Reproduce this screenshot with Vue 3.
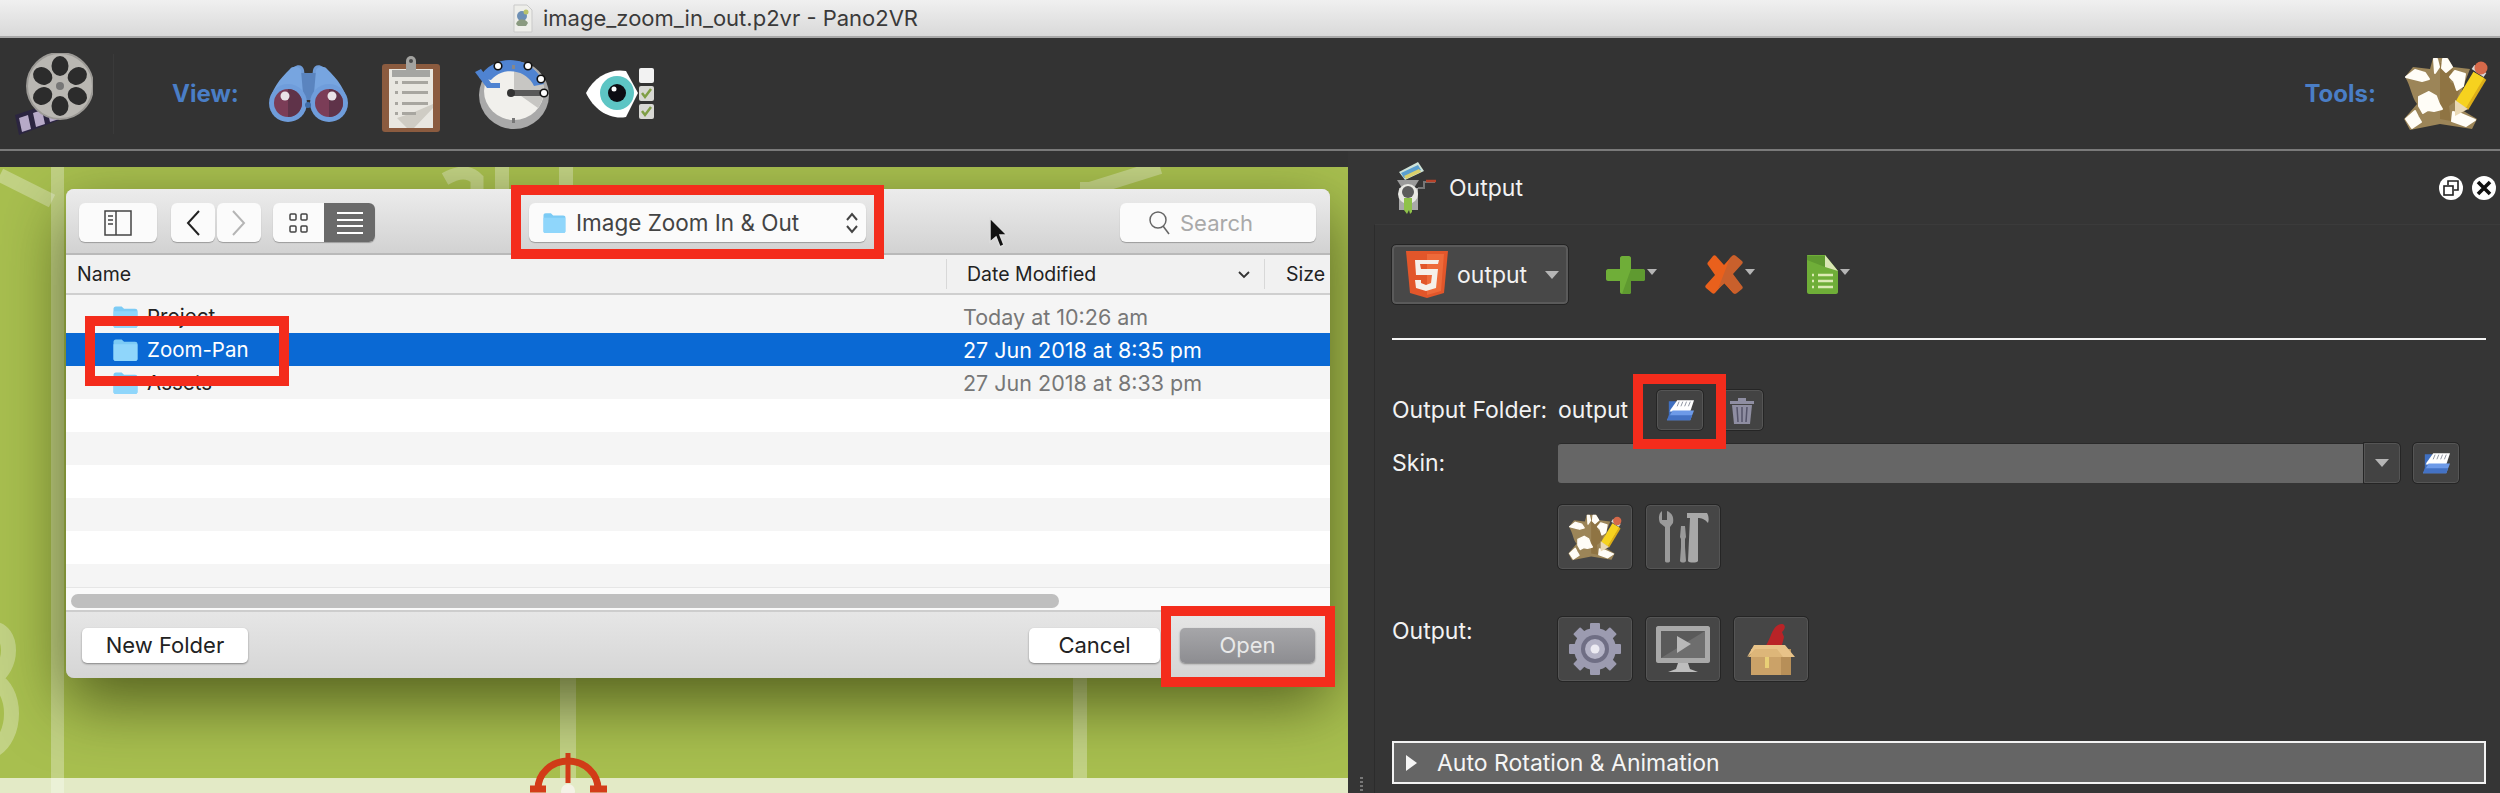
<template>
  <div class="window">
    <!-- shared icons -->
    <svg class="defs" width="0" height="0">
      <defs>
        <symbol id="folder-blue" viewBox="0 0 26 24">
          <path d="M1 4c0-1.500 1-2.500 2.500-2.500h6L12 4h11.500C25 4 26 5 26 6v16c0 1-.8 2-2 2H3c-1.200 0-2-1-2-2z" fill="#7ccbf5" />
          <path d="M1 6.500h25V22c0 1-.8 2-2 2H3c-1.200 0-2-1-2-2z" fill="#8fd6fb" />
        </symbol>
        <symbol id="open-folder" viewBox="0 0 30 22">
          <path d="M3 1h8L3 20z" fill="#3f6fc0" />
          <path d="M5 10L12 0h18l-4 12H4z" fill="#fff" />
          <path d="M14 1.500l-2 5M18 1.500l-2 5M22 1.500l-2 5M26 1.500l-2 5" stroke="#8a8f9c" stroke-width="1" />
          <path d="M7 11h23l-4 10.500H1z" fill="#6d9ae8" />
          <path d="M1 21.500L3 16h25l-2 5.500z" fill="#4472c4" />
        </symbol>
        <symbol id="hide" viewBox="0 0 84 74">
          <path d="M9 10l17 2 3-11h15l5 9 17 2-7 18-6 20 20 12-5 10-32-5-30 6-6-11 13-15c-6-8-6-18-12-27z" fill="#9c8558" />
          <path d="M36 6h8l5 5-3 14 10 4-3 14-8 6 2 15-11-2z" fill="#8f7443" />
          <g fill="#fffdf7" stroke="#fffdf7" stroke-width="2" stroke-linejoin="round">
            <path d="M30 2h3l2 8-4 6zM39 2h4l5 8-6 5-4-4z" />
            <path d="M2 20l9-7 10 3 4 6-7 2-4-1z" />
            <path d="M15 40l10-5 7 4 3 8 3 5-8 2-6-1-5 3-4-7z" />
            <path d="M2 62l9-8 3 6 3 5-9 6z" />
            <path d="M51 14l10 3-2 12-6 4-3-9-4-4z" />
            <path d="M49 55l8 2 14 6-9 6-14-5z" />
          </g>
          <path d="M57 48L75 18" stroke="#f6d21f" stroke-width="13" />
          <path d="M63 52L81 22" stroke="#dcae18" stroke-width="3" />
          <path d="M51 43l13 9-13 7z" fill="#ead9b5" />
          <path d="M69 10l12 8" stroke="#d8d8d8" stroke-width="5" />
          <circle cx="77" cy="11" r="6.500" fill="#d5694a" />
        </symbol>
      </defs>
    </svg>

    <div class="titlebar">
      <svg class="doc-icon" width="20" height="29" viewBox="0 0 20 29">
        <path d="M1 1h13l5 5v22H1z" fill="#eeeeea" stroke="#c9c9c9" />
        <circle cx="9" cy="12" r="5" fill="#6d8fb5" />
        <path d="M3 20c2-6 9-6 12-1l-2 3H5z" fill="#8a9a80" />
        <circle cx="13" cy="8" r="2.500" fill="#b8c26a" />
      </svg>
      <span>image_zoom_in_out.p2vr - Pano2VR</span>
    </div>

    <header class="toolbar">
      <svg class="reel" width="78" height="82" viewBox="0 0 78 82">
        <path d="M0 62l52-17 6 17-54 20z" fill="#2b2540" />
        <path d="M4 65l9-3 3 14-9 3zM18 60l9-3 3 14-9 3zM32 56l9-3 3 13-9 3z" fill="#b7aac8" />
        <circle cx="45" cy="33" r="33" fill="#b9b7b2" />
        <circle cx="45" cy="33" r="33" fill="none" stroke="#9c9a96" stroke-width="2" />
        <g fill="#2c2c2c">
          <ellipse v-for="angle in reelHoles" :key="angle" cx="45" cy="13" rx="8.500" ry="10" :transform="`rotate(${angle} 45 33)`" />
        </g>
        <circle cx="45" cy="33" r="4" fill="#777" />
      </svg>
      <div class="tb-sep"></div>
      <span class="tb-label view-label">View:</span>

      <svg class="tb-icon" width="81" height="57" viewBox="0 0 81 57">
        <path d="M26 2c4-3 9-2 10 3l2 15h5l2-15c1-5 6-6 10-3l-2 18H28z" fill="#6f9bd6" />
        <path d="M30 8h21v27H30z" fill="#5a84bf" />
        <path d="M22 4c2-3 9-3 11 1l3 35H2C2 25 12 14 22 4zM59 4c-2-3-9-3-11 1l-3 35h34C79 25 69 14 59 4z" fill="#77a5e0" />
        <circle cx="20" cy="38" r="19" fill="#6f9ddb" />
        <circle cx="61" cy="38" r="19" fill="#6f9ddb" />
        <circle cx="20" cy="38" r="14" fill="#7b3d57" />
        <circle cx="61" cy="38" r="14" fill="#7b3d57" />
        <path d="M20 24a14 14 0 0 1 0 28zM61 24a14 14 0 0 1 0 28z" fill="#5f3349" />
        <circle cx="17" cy="31" r="4.500" fill="#e9e4e8" />
        <circle cx="64" cy="31" r="4.500" fill="#e9e4e8" />
        <circle cx="40" cy="40" r="3" fill="#3f6ca8" />
      </svg>

      <svg class="tb-icon" width="58" height="77" viewBox="0 0 58 77">
        <rect x="0" y="9" width="58" height="68" rx="3" fill="#8b5b3f" />
        <rect x="7" y="14" width="44" height="59" fill="#e9e7e1" />
        <path d="M32 73l19-20v-4L30 58l-15 5 10 10z" fill="#cfccc4" />
        <rect x="10" y="15" width="38" height="7" fill="#a5a5a2" />
        <path d="M24 15V6a5 5 0 0 1 10 0v9z" fill="#a3a3a0" />
        <circle cx="29" cy="6" r="2" fill="#4a4a4a" />
        <g fill="#a8a6a0">
          <rect x="20" y="26" width="26" height="3" />
          <rect x="20" y="36" width="26" height="3" />
          <rect x="20" y="47" width="26" height="3" />
          <rect x="20" y="57" width="14" height="3" />
          <rect x="13" y="26" width="3" height="3" />
          <rect x="13" y="36" width="3" height="3" />
          <rect x="13" y="47" width="3" height="3" />
          <rect x="13" y="57" width="3" height="3" />
        </g>
      </svg>

      <svg class="tb-icon" width="77" height="71" viewBox="0 0 77 71">
        <ellipse cx="41" cy="37" rx="35" ry="34" fill="#a9a9a9" />
        <ellipse cx="41" cy="33" rx="30" ry="29" fill="#f1f0ec" />
        <path d="M41 33V4a30 29 0 0 1 24 46z" fill="#c7c6c3" />
        <path d="M6 20A36 36 0 0 1 71 26l-10 2A26 26 0 0 0 18 22z" fill="#4f83d1" />
        <path d="M2 14l12 16h13v-5H18L8 11z" fill="#4f83d1" />
        <path d="M38 32h32v6H38z" fill="#5a5a5a" />
        <circle cx="38" cy="35" r="4" fill="#333" />
        <g fill="#fff" stroke="#111" stroke-width="1.600">
          <circle cx="25" cy="8" r="3.800" />
          <circle cx="55" cy="8" r="3.800" />
          <circle cx="68" cy="21" r="3.800" />
          <circle cx="71" cy="35" r="3.800" />
        </g>
        <rect x="39" y="7" width="3" height="4" fill="#888" />
        <rect x="39" y="60" width="3" height="5" fill="#777" />
      </svg>

      <svg class="tb-icon eye-icon" width="68" height="52" viewBox="0 0 68 52">
        <path d="M0 25C8 8 26 0 40 3l12 22-12 24C24 52 8 42 0 25z" fill="#fff" />
        <circle cx="31" cy="25" r="17" fill="#5dc5c4" />
        <circle cx="31" cy="25" r="9" fill="#0c0c12" />
        <circle cx="28" cy="21" r="2.500" fill="#fff" />
        <rect x="53" y="0" width="15" height="15" rx="2" fill="#f2f2f2" />
        <g fill="#d8d8d4">
          <rect x="53" y="18" width="15" height="15" rx="2" />
          <rect x="53" y="36" width="15" height="15" rx="2" />
        </g>
        <path d="M56 25l3 4 6-8M56 43l3 4 6-8" fill="none" stroke="#7f9e45" stroke-width="2.500" />
      </svg>

      <span class="tb-label tools-label">Tools:</span>
      <svg class="hide-large" width="84" height="74"><use href="#hide" /></svg>
    </header>

    <main class="main">
      <div class="map-col">
        <div class="map">
          <div class="band band-left"></div>
          <div class="band band-bottom"></div>
          <div class="band band-mid-a"></div>
          <div class="band band-mid-b"></div>
          <svg class="map-marks" width="1348" height="626" viewBox="0 0 1348 626">
            <g fill="none" stroke="#fff" stroke-opacity=".3">
              <path d="M0 8l52 26" stroke-width="14" />
              <path d="M1080 22h10l70-22" stroke-width="14" />
              <path d="M445 12c14-8 24-8 32 0v30" stroke-width="13" />
              <path d="M502 0v40M566 0v40" stroke-width="14" />
              <path d="M-8 462c22 0 22 40 0 50 26 8 26 60 0 72" stroke-width="15" />
            </g>
            <g fill="none" stroke="#d33c18">
              <path d="M538 622a30 28 0 0 1 60 0" stroke-width="7" />
              <path d="M568 586v30" stroke-width="5" />
              <path d="M530 622h16M590 622h17" stroke-width="7" />
            </g>
            <circle cx="568" cy="624" r="7" fill="#f4f2e6" />
          </svg>

          <section class="dialog">
            <div class="dlg-bar">
              <button class="mac-btn side-btn">
                <svg width="28" height="26" viewBox="0 0 28 26" fill="none" stroke="#444" stroke-width="1.500">
                  <rect x="1" y="1" width="26" height="24" />
                  <path d="M12 1v24M4 6h5M4 10h5M4 14h5" />
                </svg>
              </button>
              <div class="nav-group">
                <button class="mac-btn nav-btn">
                  <svg width="14" height="26" viewBox="0 0 14 26" fill="none" stroke="#222" stroke-width="2"><path d="M13 1L2 13l11 12" /></svg>
                </button>
                <button class="mac-btn nav-btn">
                  <svg width="14" height="26" viewBox="0 0 14 26" fill="none" stroke="#b5b5b5" stroke-width="2"><path d="M1 1l11 12L1 25" /></svg>
                </button>
              </div>
              <div class="seg">
                <button class="seg-btn">
                  <svg width="19" height="20" viewBox="0 0 19 20" fill="none" stroke="#444" stroke-width="1.500">
                    <rect x="1" y="1" width="6" height="6" rx="1" />
                    <rect x="12" y="1" width="6" height="6" rx="1" />
                    <rect x="1" y="13" width="6" height="6" rx="1" />
                    <rect x="12" y="13" width="6" height="6" rx="1" />
                  </svg>
                </button>
                <button class="seg-btn seg-on">
                  <svg width="26" height="22" viewBox="0 0 26 22" fill="none" stroke="#fff" stroke-width="2"><path d="M0 1h26M0 8h26M0 14h26M0 21h26" /></svg>
                </button>
              </div>
              <div class="popup">
                <svg width="26" height="21"><use href="#folder-blue" /></svg>
                <span>Image Zoom In &amp; Out</span>
                <svg class="updown" width="14" height="22" viewBox="0 0 14 22" fill="none" stroke="#444" stroke-width="2"><path d="M2 8l5-6 5 6M2 14l5 6 5-6" /></svg>
              </div>
              <div class="search">
                <svg width="22" height="24" viewBox="0 0 22 24" fill="none" stroke="#666" stroke-width="1.500">
                  <ellipse cx="9" cy="9" rx="8" ry="8" />
                  <path d="M14 15l6 8" />
                </svg>
                <span>Search</span>
              </div>
            </div>

            <div class="list-head">
              <span class="head-name">Name</span>
              <span class="head-date">
                Date Modified
                <svg width="12" height="8" viewBox="0 0 12 8" fill="none" stroke="#333" stroke-width="1.800"><path d="M1 1l5 5 5-5" /></svg>
              </span>
              <span class="head-size">Size</span>
            </div>

            <div class="list-body">
              <div v-for="(row, i) in rows" :key="i" class="row" :class="{ selected: row.selected, white: row.white }">
                <span class="row-name">
                  <svg v-if="row.name" width="26" height="23"><use href="#folder-blue" /></svg>
                  {{ row.name }}
                </span>
                <span class="row-date">{{ row.date }}</span>
              </div>
            </div>

            <div class="scroll-strip"><div class="scroll-thumb"></div></div>

            <div class="dlg-foot">
              <button class="foot-btn new-btn">New Folder</button>
              <div class="foot-right">
                <button class="foot-btn cancel-btn">Cancel</button>
                <button class="foot-btn open-btn">Open</button>
              </div>
            </div>
          </section>

          <div class="mark mark-popup"></div>
          <div class="mark mark-row"></div>
          <div class="mark mark-open"></div>

          <svg class="cursor" width="20" height="32" viewBox="0 0 20 32">
            <path d="M2 1v24l6-5 4 10 4-2-4-10h7z" fill="#111" stroke="#ddd" stroke-width="1.500" />
          </svg>
        </div>
      </div>

      <aside class="panel">
        <div class="panel-head">
          <svg width="40" height="52" viewBox="0 0 40 52">
            <path d="M3 10L22 0l6 9-19 9z" fill="#cfe3d8" />
            <path d="M5 11l17-8 3 5-17 8z" fill="#5a9fcf" />
            <path d="M8 14l15-7 2 3-15 7z" fill="#d9cf6a" />
            <path d="M1 18h22l-5 8H6z" fill="#9a9a9a" />
            <path d="M3 26h19v22H3z" fill="#a9a9a9" />
            <circle cx="12" cy="32" r="10" fill="#e9e9e4" />
            <circle cx="12" cy="30" r="6" fill="#5c5c5c" />
            <path d="M22 26h6v-6h11" fill="none" stroke="#777" stroke-width="2" />
            <path d="M30 19h10" stroke="#b5432b" stroke-width="2.500" />
            <path d="M8 36h8v14l-2 2-1-4-2 4-3-4z" fill="#8fc24a" />
          </svg>
          <span>Output</span>
          <div class="win-btns">
            <button class="win-btn">
              <svg width="16" height="16" viewBox="0 0 16 16" fill="none" stroke="#222" stroke-width="1.600">
                <rect x="1" y="6" width="9" height="9" />
                <path d="M5 5V1h10v9h-4" />
              </svg>
            </button>
            <button class="win-btn">
              <svg width="16" height="16" viewBox="0 0 16 16" fill="none" stroke="#111" stroke-width="3.600"><path d="M2 2l12 12M14 2L2 14" /></svg>
            </button>
          </div>
        </div>

        <div class="panel-body">
          <div class="out-row">
            <button class="out-select">
              <svg width="42" height="47" viewBox="0 0 42 47">
                <path d="M0 0h42l-4 42-17 5-17-5z" fill="#e2562a" />
                <path d="M21 3h17l-3 37-14 4z" fill="#ee6a3a" />
                <path d="M33 9H9l1 15h16l-1 8-5 2-5-2v-3H9l1 8 10 3 10-3 2-19H15l-1-5h18z" fill="#f5efe9" />
              </svg>
              <span>output</span>
              <i class="tri"></i>
            </button>
            <div class="tool tool-add">
              <svg width="39" height="38" viewBox="0 0 39 38">
                <path d="M14 2c0-1 1-2 2-2h7c1 0 2 1 2 2v11h12c1 0 2 1 2 2v8c0 1-1 2-2 2H25v11c0 1-1 2-2 2h-7c-1 0-2-1-2-2V25H2c-1 0-2-1-2-2v-8c0-1 1-2 2-2h12z" fill="#6fae38" />
                <path d="M25 13h12c1 0 2 1 2 2v8c0 1-1 2-2 2H25v11c0 1-1 2-2 2h-7z" fill="#5f9a30" />
              </svg>
              <i class="tri tri-small"></i>
            </div>
            <div class="tool tool-del">
              <svg width="39" height="39" viewBox="0 0 39 39">
                <path d="M5 6l4-5c1-1 2-1 3 0l8 9 8-9c1-1 2-1 3 0l6 5c1 1 1 2 0 3l-9 10 9 12c1 1 1 2 0 3l-5 4c-1 1-2 1-3 0l-9-10-9 10c-1 1-2 1-3 0l-6-5c-1-1-1-2 0-3l9-10-7-10c-1-1-1-2 1-4z" fill="#e9601c" />
                <path d="M26 3l3-2c1-1 2-1 3 0l6 5c1 1 1 2 0 3l-9 10 9 12c1 1 1 2 0 3l-5 4c-1 1-2 1-3 0l-9-10-7 6z" fill="#c9602c" />
              </svg>
              <i class="tri tri-small"></i>
            </div>
            <div class="tool tool-doc">
              <svg width="31" height="39" viewBox="0 0 31 39">
                <path d="M0 1c0-1 0-1 1-1h17l13 16v21c0 1-1 2-2 2H2c-1 0-2-1-2-2z" fill="#6fae38" />
                <path d="M18 0l13 16-13-4z" fill="#d9e6b4" />
                <path d="M0 1h18v11L0 5z" fill="#5f9a30" />
                <path d="M11 20h15M11 26h15M11 32h15M5 20h2M5 26h2M5 32h2" stroke="#dceab4" stroke-width="2.500" />
              </svg>
              <i class="tri tri-small"></i>
            </div>
          </div>

          <hr class="rule" />

          <div class="form">
            <label>Output Folder:</label>
            <div class="folder-line">
              <span class="folder-value">output</span>
              <button class="sq-btn"><svg width="28" height="21"><use href="#open-folder" /></svg></button>
              <button class="sq-btn trash-btn">
                <svg width="24" height="27" viewBox="0 0 24 27">
                  <path d="M0 4h24v3H0zM8 1h8v3H8z" fill="#8f8ea2" />
                  <path d="M2 8h20l-2 19H4z" fill="#8f8ea2" />
                  <path d="M7 10l1 15M12 10v15M17 10l-1 15" stroke="#55546a" stroke-width="1.500" />
                </svg>
              </button>
            </div>

            <label>Skin:</label>
            <div class="skin-line">
              <div class="skin-field"></div>
              <button class="skin-drop"><i class="tri"></i></button>
              <button class="sq-btn skin-open"><svg width="28" height="21"><use href="#open-folder" /></svg></button>
            </div>

            <label></label>
            <div class="icon-line">
              <button class="big-btn"><svg width="54" height="47"><use href="#hide" /></svg></button>
              <button class="big-btn">
                <svg width="52" height="52" viewBox="0 0 52 52">
                  <path d="M5 0v9h5V0c5 2 7 6 6 12l-3 4v34c0 2-5 2-5 0V16L3 12C1 7 2 2 5 0z" fill="#9a9a9a" />
                  <path d="M24 15h4l1 11-1 2v8l1 14c-1 2-5 2-6 0l1-14v-8l-1-2z" fill="#9a9a9a" />
                  <path d="M30 2h20c2 3 2 8 1 10-3-4-7-5-10-5v43c-1 2-9 2-10 0l2-43h-3z" fill="#a8a8a8" />
                </svg>
              </button>
            </div>

            <label class="out-label">Output:</label>
            <div class="icon-line output-line">
              <button class="big-btn">
                <svg width="52" height="52" viewBox="0 0 52 52">
                  <g fill="#9c9bb0">
                    <rect v-for="angle in gearTeeth" :key="angle" x="21" y="0" width="10" height="12" rx="1" :transform="`rotate(${angle} 26 26)`" />
                  </g>
                  <circle cx="26" cy="26" r="21" fill="#9c9bb0" />
                  <circle cx="26" cy="26" r="14" fill="#6f6e84" />
                  <circle cx="26" cy="26" r="10" fill="#b4b3c6" />
                  <circle cx="26" cy="26" r="4.500" fill="#ecebf2" />
                </svg>
              </button>
              <button class="big-btn">
                <svg width="54" height="46" viewBox="0 0 54 46">
                  <path d="M2 0h50c1 0 2 1 2 2v33c0 1-1 2-2 2H2c-1 0-2-1-2-2V2C0 1 1 0 2 0z" fill="#a9a9a9" />
                  <rect x="5" y="5" width="44" height="27" fill="#5a5a5a" />
                  <path d="M5 32L49 5v27z" fill="#6e6e6e" />
                  <path d="M21 10l14 8-14 9z" fill="#b8b8b8" />
                  <path d="M22 37h10l2 6 8 3H12l8-3z" fill="#bdbdbd" />
                </svg>
              </button>
              <button class="big-btn">
                <svg width="48" height="52" viewBox="0 0 48 52">
                  <path d="M16 26c6-6 7-14 11-20 1-3 8-7 10-4 2 2 0 5-2 7l2 5-3 12z" fill="#b92327" />
                  <rect x="4" y="26" width="40" height="26" fill="#cba268" />
                  <rect x="34" y="26" width="10" height="26" fill="#b78f58" />
                  <path d="M0 34l7-12h31l10 12H35l-6-8H10z" fill="#e8c389" />
                  <path d="M8 26h22l6 8H1z" fill="#ddb679" />
                  <rect x="18" y="34" width="4" height="11" fill="#e9cf76" />
                </svg>
              </button>
            </div>
          </div>

          <div class="accordion">
            <i class="acc-tri"></i>
            <span>Auto Rotation &amp; Animation</span>
          </div>
        </div>

        <div class="mark mark-folder"></div>
        <div class="grip"></div>
      </aside>
    </main>
  </div>
</template>

<script setup>
const reelHoles = [0, 60, 120, 180, 240, 300]
const gearTeeth = [0, 45, 90, 135, 180, 225, 270, 315]

const rows = [
  { name: 'Project', date: 'Today at 10:26 am' },
  { name: 'Zoom-Pan', date: '27 Jun 2018 at 8:35 pm', selected: true },
  { name: 'Assets', date: '27 Jun 2018 at 8:33 pm' },
  { white: true },
  {},
  { white: true },
  {},
  { white: true },
  {}
]
</script>

<style>
html, body {
  margin: 0;
  background: #353535;
}
</style>

<style scoped>
* {
  box-sizing: border-box;
}

.window {
  width: 2500px;
  height: 793px;
  overflow: hidden;
  position: relative;
  font-family: Inter, "Liberation Sans", sans-serif;
  background: #353535;
}

.defs {
  position: absolute;
}

button {
  font-family: inherit;
  padding: 0;
  margin: 0;
}

.titlebar {
  height: 38px;
  padding-left: 513px;
  display: flex;
  align-items: center;
  gap: 10px;
  background: linear-gradient(#f0f0f0, #d9d9d9);
  border-bottom: 2px solid #a8a8a8;
  font-size: 22px;
  color: #3a3a3a;
}

.toolbar {
  height: 113px;
  display: flex;
  align-items: center;
  padding: 0 12px 0 15px;
  background: #333;
  border-bottom: 2px solid #7a7a7a;
}

.tb-sep {
  width: 1px;
  height: 80px;
  margin-left: 20px;
  background: #3a3a3a;
}

.tb-label {
  font-size: 24px;
  font-weight: 700;
  color: #4a7ec6;
}

.view-label {
  margin-left: 58px;
}

.tb-icon {
  margin-left: 33px;
}

.view-label + .tb-icon {
  margin-left: 29px;
}

.eye-icon {
  margin-left: 36px;
}

.tools-label {
  margin-left: auto;
}

.hide-large {
  margin-left: 28px;
}

.main {
  height: 642px;
  display: flex;
}

.map-col {
  width: 1348px;
  padding-top: 16px;
  background: #333;
}

.map {
  position: relative;
  width: 1348px;
  height: 626px;
  overflow: hidden;
  background: #a8bf4f;
}

.band {
  position: absolute;
  background: rgba(255, 255, 255, 0.3);
}

.band-left {
  left: 51px;
  top: 0;
  bottom: 0;
  width: 13px;
}

.band-bottom {
  left: 0;
  right: 0;
  bottom: 0;
  height: 15px;
  background: rgba(255, 255, 255, 0.68);
}

.band-mid-a {
  left: 560px;
  top: 510px;
  height: 101px;
  width: 16px;
}

.band-mid-b {
  left: 1073px;
  top: 510px;
  height: 101px;
  width: 14px;
}

.map-marks {
  position: absolute;
  left: 0;
  top: 0;
}

.dialog {
  position: absolute;
  left: 66px;
  top: 22px;
  width: 1264px;
  height: 489px;
  display: flex;
  flex-direction: column;
  overflow: hidden;
  border-radius: 8px;
  font-size: 20px;
  color: #222;
  background: #ddd;
}

.map::after {
  content: "";
  position: absolute;
  left: 66px;
  top: 22px;
  width: 1264px;
  height: 489px;
  border-radius: 8px;
  box-shadow: 0 24px 64px rgba(30, 35, 0, 0.62);
}

.dlg-bar {
  height: 66px;
  flex: none;
  position: relative;
  display: flex;
  align-items: center;
  padding: 3px 14px 0 13px;
  background: linear-gradient(#ececec, #d2d2d2);
  border-bottom: 2px solid #b9b9b9;
}

.mac-btn,
.seg,
.popup,
.search {
  height: 39px;
  background: #fbfbfb;
  border: none;
  border-radius: 6px;
  box-shadow: 0 1px 1px rgba(0, 0, 0, 0.28);
}

.mac-btn {
  display: flex;
  align-items: center;
  justify-content: center;
}

.side-btn {
  width: 78px;
}

.nav-group {
  display: flex;
  gap: 2px;
  margin-left: 14px;
}

.nav-btn {
  width: 44px;
}

.seg {
  display: flex;
  width: 102px;
  margin-left: 12px;
  overflow: hidden;
}

.seg-btn {
  width: 51px;
  border: none;
  background: transparent;
  display: flex;
  align-items: center;
  justify-content: center;
}

.seg-on {
  background: #6a6a6a;
}

.popup {
  width: 337px;
  margin-left: 154px;
  display: flex;
  align-items: center;
  padding: 0 7px 0 12px;
  color: #444;
  font-size: 22.500px;
}

.popup span {
  margin-left: 9px;
}

.updown {
  margin-left: auto;
}

.search {
  width: 196px;
  margin-left: auto;
  display: flex;
  align-items: center;
  padding-left: 29px;
  gap: 9px;
  color: #a9a9a9;
  font-size: 22px;
}

.list-head {
  height: 40px;
  flex: none;
  display: flex;
  align-items: center;
  background: #f1f1f1;
  border-bottom: 2px solid #cfcfcf;
  font-size: 19.500px;
  color: #222;
}

.head-name {
  width: 880px;
  padding-left: 11px;
}

.head-date {
  width: 319px;
  height: 30px;
  display: flex;
  align-items: center;
  padding-left: 20px;
  border-left: 1px solid #d8d8d8;
  border-right: 1px solid #d8d8d8;
  position: relative;
}

.head-date svg {
  position: absolute;
  left: 291px;
  top: 12px;
}

.head-size {
  padding-left: 21px;
}

.list-body {
  height: 292px;
  flex: none;
  overflow: hidden;
  padding-top: 5px;
  background: #f5f5f5;
}

.row {
  height: 33px;
  flex: none;
  display: flex;
  align-items: center;
  background: #f5f5f5;
  color: #222;
}

.row.white {
  background: #fff;
}

.row.selected {
  background: #0a69d4;
  color: #fff;
}

.row-name {
  width: 880px;
  padding-left: 46px;
  display: flex;
  align-items: center;
  gap: 9px;
  font-size: 20.500px;
}

.row-date {
  padding-left: 17px;
  color: #777;
  font-size: 21.500px;
}

.row.selected .row-date {
  color: #fff;
}

.scroll-strip {
  height: 25px;
  flex: none;
  padding: 6px 0 0 5px;
  background: #fafafa;
  border-top: 1px solid #e6e6e6;
  border-bottom: 2px solid #cdcdcd;
}

.scroll-thumb {
  width: 988px;
  height: 14px;
  border-radius: 7px;
  background: #bfbfbf;
}

.dlg-foot {
  flex: 1;
  display: flex;
  align-items: center;
  justify-content: space-between;
  padding: 0 15px 0 16px;
  background: linear-gradient(#e6e6e6, #d5d5d5);
}

.foot-right {
  display: flex;
  gap: 20px;
}

.foot-btn {
  height: 35px;
  border: none;
  border-radius: 5px;
  background: #fff;
  color: #222;
  font-size: 22px;
  box-shadow: 0 1px 2px rgba(0, 0, 0, 0.4);
}

.new-btn {
  width: 166px;
}

.cancel-btn {
  width: 131px;
}

.open-btn {
  width: 135px;
  background: linear-gradient(#a6a6a9, #8d8d91);
  color: #e9e9e9;
}

/* red annotations drawn over the capture */
.mark {
  position: absolute;
  z-index: 5;
  border: 10px solid #f42c1c;
}

.mark-popup {
  left: 511px;
  top: 18px;
  width: 373px;
  height: 74px;
}

.mark-row {
  left: 85px;
  top: 149px;
  width: 204px;
  height: 70px;
}

.mark-open {
  left: 1161px;
  top: 439px;
  width: 174px;
  height: 81px;
}

.mark-folder {
  left: 285px;
  top: 223px;
  width: 93px;
  height: 75px;
}

.cursor {
  position: absolute;
  z-index: 6;
  left: 988px;
  top: 50px;
}

.panel {
  position: relative;
  flex: 1;
  background: #353535;
  color: #f2f2f2;
  font-size: 23px;
}

.panel-head {
  height: 73px;
  display: flex;
  align-items: center;
  padding: 0 4px 0 48px;
  gap: 13px;
  background: #353535;
}

.win-btns {
  margin-left: auto;
  display: flex;
  gap: 9px;
  margin-top: 0;
}

.win-btn {
  width: 24px;
  height: 24px;
  border: none;
  border-radius: 50%;
  background: #fff;
  display: flex;
  align-items: center;
  justify-content: center;
}

.panel-body {
  margin-left: 26px;
  height: 569px;
  padding: 20px 14px 0 17px;
  border-left: 1px solid #2c2c2c;
  border-top: 1px solid #3b3b3b;
}

.out-row {
  display: flex;
  align-items: center;
  height: 59px;
}

.out-select {
  width: 176px;
  height: 59px;
  display: flex;
  align-items: center;
  padding-left: 12px;
  gap: 9px;
  background: #484848;
  border: 2px solid #5a5a5a;
  outline: 1px solid #242424;
  border-radius: 4px;
  color: #f2f2f2;
  font-size: 23px;
}

.tri {
  display: inline-block;
  width: 0;
  height: 0;
  border-left: 7px solid transparent;
  border-right: 7px solid transparent;
  border-top: 8px solid #b5b5b5;
}

.out-select .tri {
  margin-left: 9px;
}

.tri-small {
  border-left-width: 5px;
  border-right-width: 5px;
  border-top-width: 6px;
  margin-left: 1px;
  margin-bottom: 6px;
}

.tool {
  display: flex;
  align-items: center;
  gap: 1px;
}

.tool-add {
  margin-left: 38px;
}

.tool-del {
  margin-left: 47px;
}

.tool-doc {
  margin-left: 52px;
}

.rule {
  height: 2px;
  margin: 34px 0 50px;
  border: none;
  background: #f4f4f4;
}

.form {
  display: grid;
  grid-template-columns: 166px 1fr;
  row-gap: 13px;
}

.form label {
  display: flex;
  align-items: center;
}

.folder-line {
  display: flex;
  align-items: center;
  height: 40px;
}

.folder-value {
  width: 99px;
}

.sq-btn {
  width: 46px;
  height: 40px;
  display: flex;
  align-items: center;
  justify-content: center;
  background: #434343;
  border: 1px solid #555;
  outline: 1px solid #252525;
  border-radius: 4px;
}

.trash-btn {
  margin-left: 17px;
  width: 43px;
}

.skin-line {
  display: flex;
  height: 40px;
}

.skin-field {
  width: 806px;
  background: #666;
  border-radius: 3px 0 0 3px;
  border-top: 1px solid #2a2a2a;
}

.skin-drop {
  width: 36px;
  background: #434343;
  border: 1px solid #555;
  border-radius: 0 4px 4px 0;
  outline: 1px solid #252525;
  display: flex;
  align-items: center;
  justify-content: center;
}

.skin-open {
  margin-left: 13px;
}

.icon-line {
  display: flex;
  gap: 14px;
  margin-top: 9px;
}

.big-btn {
  width: 74px;
  height: 64px;
  display: flex;
  align-items: center;
  justify-content: center;
  background: #464646;
  border: 1px solid #555;
  outline: 1px solid #252525;
  border-radius: 4px;
}

.form .out-label {
  align-items: flex-start;
  margin-top: 35px;
}

.output-line {
  margin-top: 35px;
}

.accordion {
  height: 43px;
  margin-top: 60px;
  display: flex;
  align-items: center;
  padding-left: 12px;
  gap: 20px;
  background: #656565;
  border: 2px solid #f2f2f2;
  color: #f5f5f5;
}

.acc-tri {
  width: 0;
  height: 0;
  border-top: 8px solid transparent;
  border-bottom: 8px solid transparent;
  border-left: 11px solid #f5f5f5;
}

.grip {
  position: absolute;
  left: 12px;
  bottom: 0;
  width: 3px;
  height: 16px;
  background: repeating-linear-gradient(#777 0 2px, transparent 2px 4px);
}
</style>
